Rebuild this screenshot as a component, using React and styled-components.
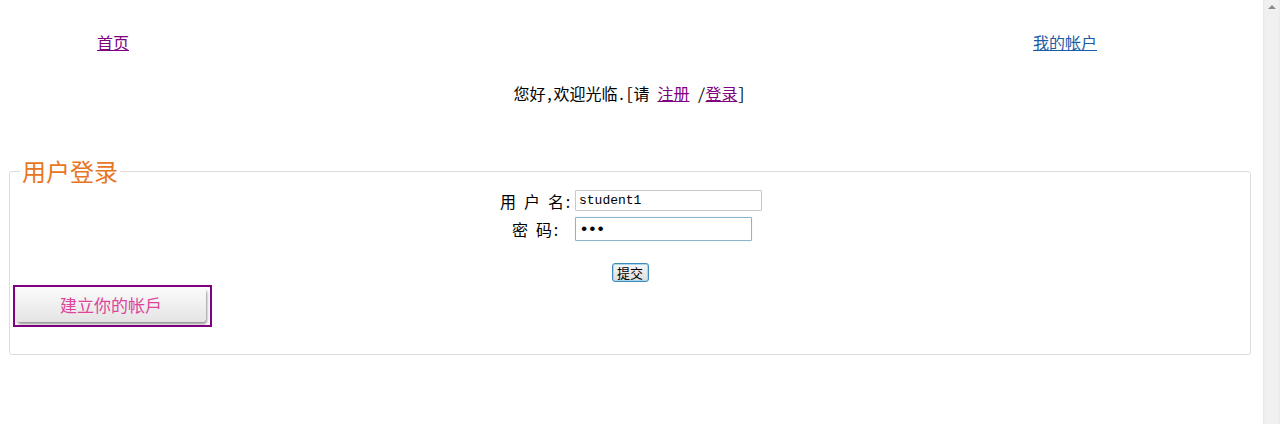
import React from "react";
import styled, { createGlobalStyle } from "styled-components";

const GlobalStyle = createGlobalStyle`
  html, body {
    margin: 0;
    padding: 0;
    background: #fff;
  }
  body {
    font-family: "Noto Sans Mono CJK SC", "Noto Sans CJK SC", "DejaVu Sans", sans-serif;
    font-size: 16px;
    color: #000;
  }
`;

const Page = styled.div`
  display: flex;
  height: 424px;
  overflow: hidden;
`;

const Main = styled.div`
  flex: 1;
  min-width: 0;
`;

const Scrollbar = styled.div`
  width: 17px;
  flex: none;
  background: linear-gradient(to right, #e6e6e6 0, #f0f0f0 2px, #f0f0f0 15px, #e9e9e9 17px);
  display: flex;
  justify-content: center;
  padding-top: 5px;
  box-sizing: border-box;
`;

const ArrowUp = styled.div`
  width: 0;
  height: 0;
  border-left: 4px solid transparent;
  border-right: 4px solid transparent;
  border-bottom: 4px solid #8a8a8a;
`;

const TopNav = styled.nav`
  display: flex;
  justify-content: space-between;
  padding: 31px 166px 0 97px;
  line-height: 22px;
  font-family: "Noto Sans CJK SC", sans-serif;
`;

const NavLink = styled.a`
  color: ${(p) => (p.$visited ? "#800080" : "#1b5ea6")};
  text-decoration: underline;
  font-size: 16px;
`;

const Welcome = styled.p`
  margin: 29px 0 0;
  text-align: center;
  font-size: 16px;
  line-height: 22px;
  white-space: pre;
  padding-right: 4px;

  a {
    color: #800080;
  }
`;

const LoginBox = styled.fieldset`
  margin: 53px 12px 0 9px;
  padding: 0 3px 27px;
  border: 1px solid #dcdcdc;
  border-radius: 3px;
`;

const Legend = styled.legend`
  margin-left: 7px;
  padding: 0 2px;
  color: #e8761e;
  font-family: "Noto Sans CJK SC", sans-serif;
  font-size: 24px;
  line-height: 28px;
`;

const FormTable = styled.div`
  display: grid;
  grid-template-columns: 76px auto;
  column-gap: 1px;
  row-gap: 6px;
  justify-content: center;
  align-items: center;
  margin-top: 5px;
`;

const Label = styled.label`
  text-align: center;
  font-size: 16px;
  line-height: 20px;
  white-space: pre;
`;

const Field = styled.input`
  box-sizing: border-box;
  width: ${(p) => p.$w}px;
  height: ${(p) => p.$h}px;
  margin: 0;
  padding: 1px 3px;
  border: 1px solid ${(p) => (p.$focus ? "#8cb4cf" : "#c8c8c8")};
  border-radius: 1px;
  font-family: "Liberation Mono", "DejaVu Sans Mono", monospace;
  font-size: ${(p) => (p.type === "password" ? "17px" : "13px")};
  letter-spacing: ${(p) => (p.type === "password" ? "-2px" : "0")};
  color: #000;
  outline: none;
  box-shadow: ${(p) => (p.$focus ? "0 0 1px #b8d4e6" : "none")};
`;

const SubmitRow = styled.div`
  display: flex;
  justify-content: center;
  margin-top: 22px;
`;

const SubmitButton = styled.button`
  width: 37px;
  height: 19px;
  padding: 0;
  border: 1px solid #3c8bb8;
  border-radius: 3px;
  background: linear-gradient(#f6f6f6, #dedede);
  box-shadow: inset 0 0 0 1px #a9d6ee;
  font-family: "Noto Sans CJK SC", sans-serif;
  font-size: 13px;
  line-height: 15px;
  color: #000;
`;

const CreateWrap = styled.div`
  display: inline-flex;
  margin: 3px 0 0 0;
  padding: 1px 4px 3px 1px;
  border: 2px solid #800080;
`;

const CreateButton = styled.button`
  width: 190px;
  height: 34px;
  border: none;
  border-radius: 4px;
  background: linear-gradient(#fbfbfb, #e4e4e4);
  box-shadow: 1px 2px 3px rgba(0, 0, 0, 0.45);
  color: #e0449a;
  font-family: "Noto Sans CJK SC", sans-serif;
  font-size: 17px;
  line-height: 22px;
`;

export default function App() {
  return (
    <>
      <GlobalStyle />
      <Page>
        <Main>
          <TopNav>
            <NavLink href="#" $visited>首页</NavLink>
            <NavLink href="#">我的帐户</NavLink>
          </TopNav>
          <Welcome>
            您好,欢迎光临.[请 <a href="#">注册</a> /<a href="#">登录</a>]
          </Welcome>
          <LoginBox>
            <Legend>用户登录</Legend>
            <FormTable>
              <Label>用 户 名:</Label>
              <Field $w={187} $h={21} defaultValue="student1" />
              <Label>密 码:</Label>
              <Field $w={177} $h={24} $focus type="password" defaultValue="abc" />
            </FormTable>
            <SubmitRow>
              <SubmitButton>提交</SubmitButton>
            </SubmitRow>
            <CreateWrap>
              <CreateButton>建立你的帐戶</CreateButton>
            </CreateWrap>
          </LoginBox>
        </Main>
        <Scrollbar>
          <ArrowUp />
        </Scrollbar>
      </Page>
    </>
  );
}
